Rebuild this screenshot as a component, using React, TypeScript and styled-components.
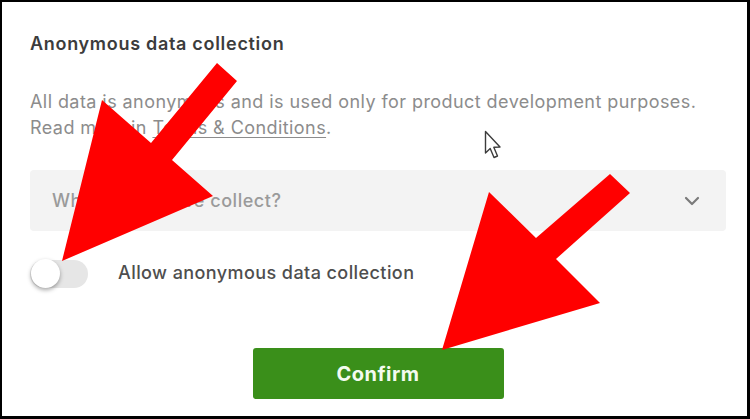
import styled, { createGlobalStyle } from 'styled-components';

const GlobalStyle = createGlobalStyle`
  html, body {
    margin: 0;
    padding: 0;
    background: #ffffff;
  }

  body {
    font-family: Inter, "Noto Sans", "Liberation Sans", sans-serif;
  }
`;

const App = () => {
  return (
    <Page>
      <GlobalStyle />
      <Frame>
        <Title>Anonymous data collection</Title>
        <Description>
          All data is anonymous and is used only for product development purposes.
          <br />
          Read more in <TermsLink>Terms &amp; Conditions</TermsLink>.
        </Description>

        <Accordion>
          <span>What data do we collect?</span>
          <svg width="16" height="10" viewBox="0 0 16 10">
            <path d="M2 2 L8 8 L14 2" fill="none" stroke="#7a7a7a" strokeWidth="2.2" strokeLinecap="round" strokeLinejoin="round" />
          </svg>
        </Accordion>

        <ToggleRow>
          <Switch>
            <Knob />
          </Switch>
          <ToggleLabel>Allow anonymous data collection</ToggleLabel>
        </ToggleRow>

        <Actions>
          <ConfirmButton>Confirm</ConfirmButton>
        </Actions>
      </Frame>

      <Overlay width="750" height="419" viewBox="0 0 750 419">
        {/* mouse pointer */}
        <path
          d="M485.5 131.5 L485.5 153 L490.2 148.6 L494 157.5 L497.5 156 L493.8 147.3 L500 147 Z"
          fill="#ffffff"
          stroke="#3c3c3c"
          strokeWidth="1.4"
          strokeLinejoin="round"
        />
        {/* red arrows */}
        <polygon points="217,63 237,81 172,160 213,196 62,261 102,100 151,143" fill="#ff0000" />
        <polygon points="610,174 630,193 556,259 600,303 442,350 489,192 536,238" fill="#ff0000" />
      </Overlay>
    </Page>
  );
};

const Page = styled.div`
  position: relative;
  width: 750px;
  height: 419px;
  overflow: hidden;
`;

const Frame = styled.div`
  box-sizing: border-box;
  width: 750px;
  height: 419px;
  border-style: solid;
  border-color: #000000;
  border-width: 2px 3px 3px 2px;
  background: #ffffff;
  padding: 30px 21px 0 28px;
  display: flex;
  flex-direction: column;
`;

const Title = styled.h3`
  margin: 0;
  font-size: 18px;
  line-height: 24px;
  font-weight: 600;
  color: #3c3c3c;
  letter-spacing: 0.7px;
`;

const Description = styled.p`
  margin: 33px 0 0;
  font-size: 18px;
  line-height: 26px;
  font-weight: 400;
  color: #8c8c8c;
  letter-spacing: 0.43px;
`;

const TermsLink = styled.a`
  color: inherit;
  text-decoration: underline;
  text-underline-offset: 3px;
`;

const Accordion = styled.div`
  margin-top: 29px;
  height: 61px;
  box-sizing: border-box;
  padding: 0 26px 0 22px;
  background: #f3f3f3;
  border-radius: 4px;
  display: flex;
  align-items: center;
  justify-content: space-between;

  > span {
    font-size: 18px;
    font-weight: 500;
    color: #9a9a9a;
    letter-spacing: 0.55px;
  }
`;

const ToggleRow = styled.div`
  margin-top: 27px;
  height: 32px;
  display: flex;
  align-items: center;
  gap: 30px;
`;

const Switch = styled.div`
  position: relative;
  width: 58px;
  height: 28px;
  border-radius: 14px;
  background: #e6e6e6;
  flex-shrink: 0;
`;

const Knob = styled.div`
  position: absolute;
  left: 1px;
  top: -1px;
  width: 29px;
  height: 29px;
  border-radius: 50%;
  background: #ffffff;
  box-shadow: 0 2px 4px rgba(0, 0, 0, 0.35);
`;

const ToggleLabel = styled.span`
  margin-bottom: 4px;
  font-size: 18px;
  font-weight: 500;
  color: #4e4e4e;
  letter-spacing: 0.42px;
`;

const Actions = styled.div`
  margin-top: 58px;
  display: flex;
  justify-content: center;
`;

const ConfirmButton = styled.button`
  width: 251px;
  height: 51px;
  border: none;
  border-radius: 3px;
  background: #3a8f1a;
  color: #f4fbef;
  font-family: inherit;
  font-size: 20px;
  font-weight: 700;
  letter-spacing: 0.5px;
  cursor: pointer;
`;

const Overlay = styled.svg`
  position: absolute;
  left: 0;
  top: 0;
  pointer-events: none;
`;

export default App;
